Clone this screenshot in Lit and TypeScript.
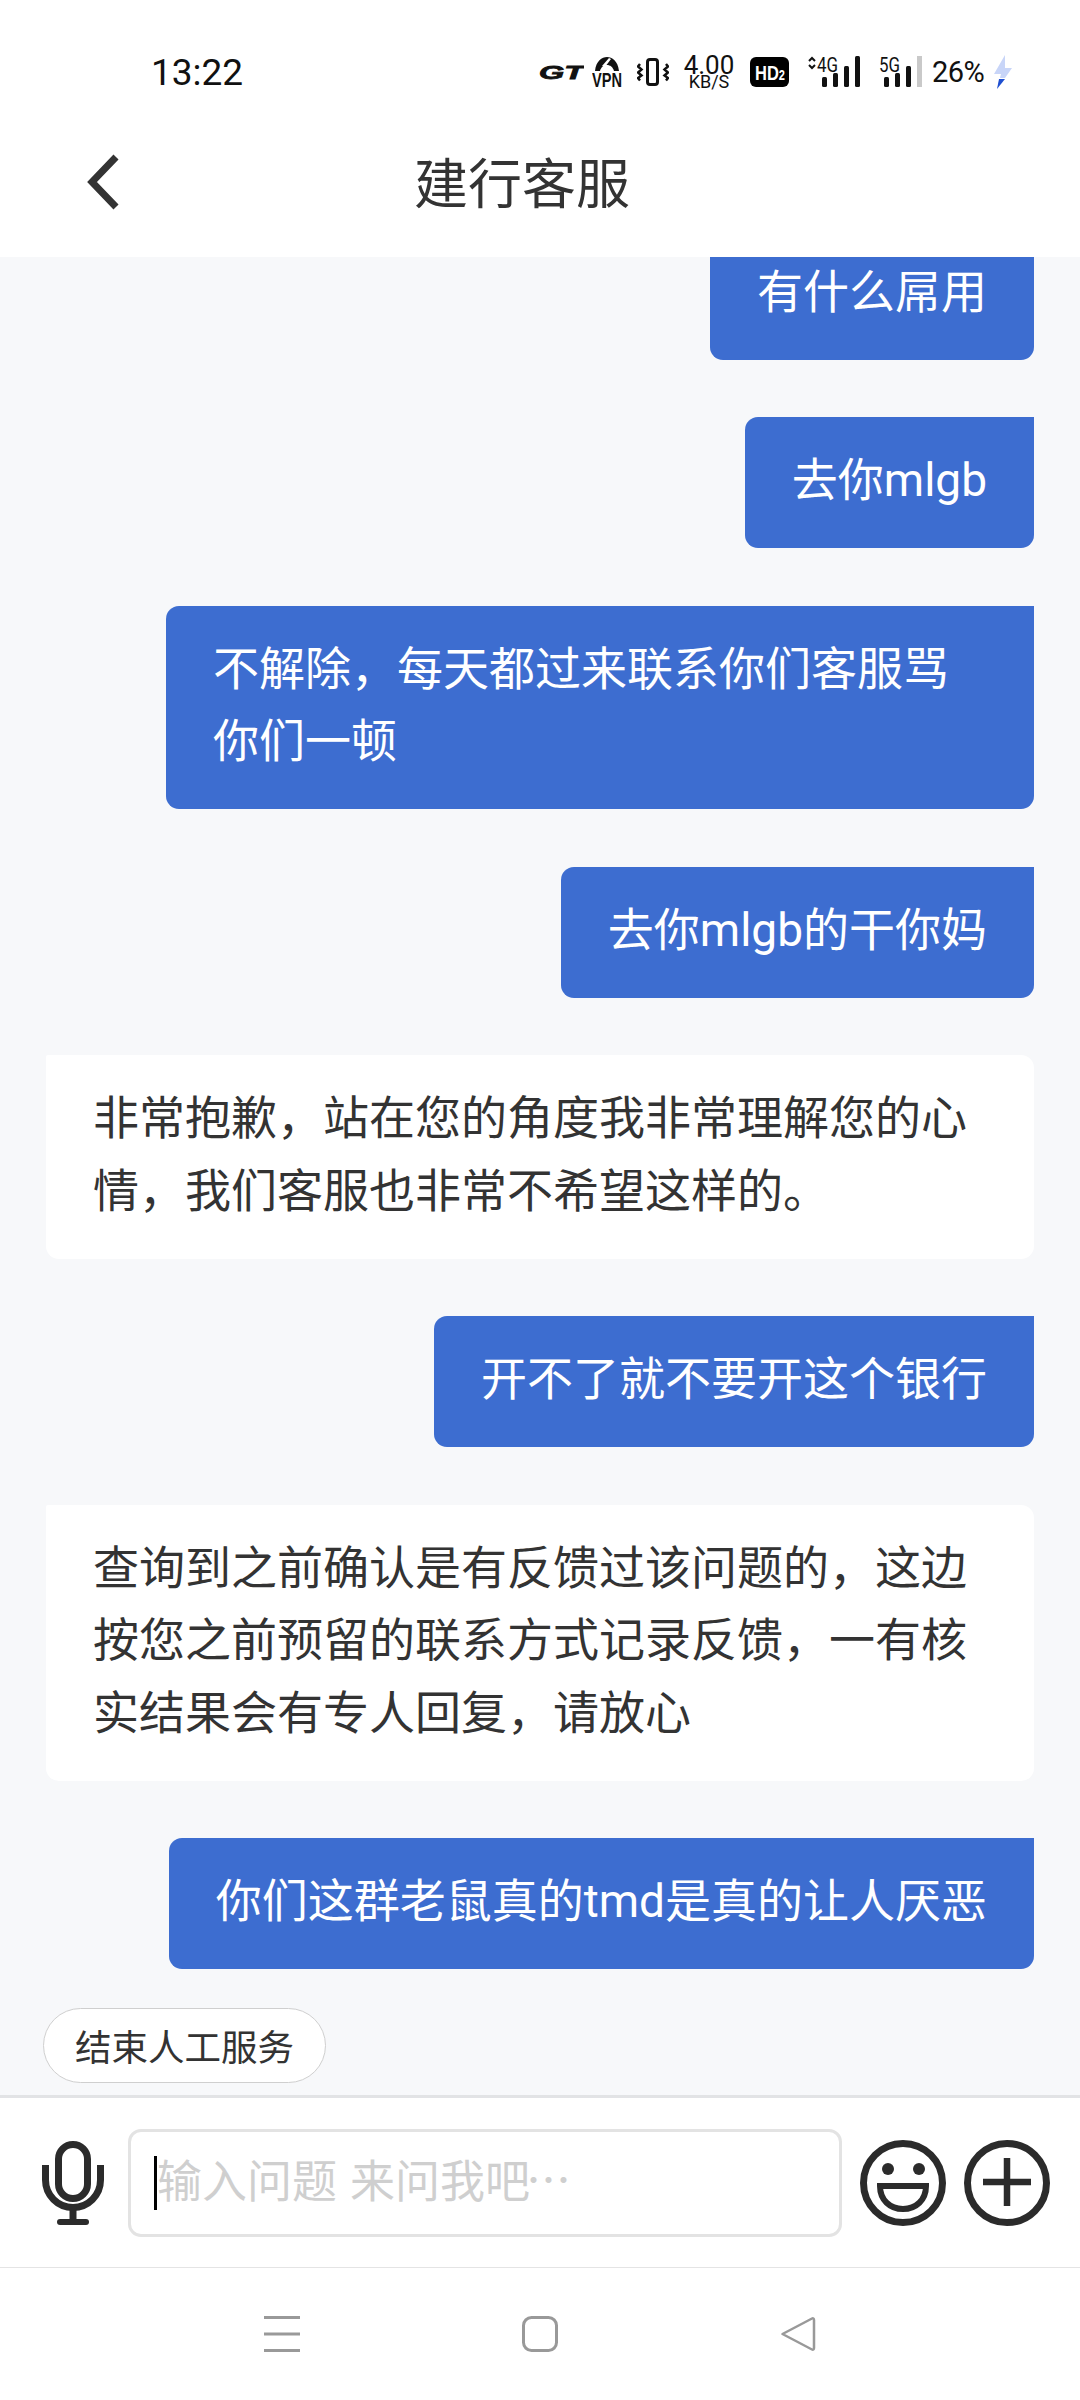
import { LitElement, css, html } from 'lit';
import { customElement } from 'lit/decorators.js';

type Msg = { from: 'user' | 'agent'; text: string };

const MESSAGES: Msg[] = [
  { from: 'user', text: '有什么屌用' },
  { from: 'user', text: '去你mlgb' },
  { from: 'user', text: '不解除，每天都过来联系你们客服骂你们一顿' },
  { from: 'user', text: '去你mlgb的干你妈' },
  { from: 'agent', text: '非常抱歉，站在您的角度我非常理解您的心情，我们客服也非常不希望这样的。' },
  { from: 'user', text: '开不了就不要开这个银行' },
  { from: 'agent', text: '查询到之前确认是有反馈过该问题的，这边按您之前预留的联系方式记录反馈，一有核实结果会有专人回复，请放心' },
  { from: 'user', text: '你们这群老鼠真的tmd是真的让人厌恶' },
];

@customElement('app-root')
export class AppRoot extends LitElement {
  private statusBar() {
    return html`
      <div class="status">
        <span class="time">13:22</span>
        <div class="status-icons">
          <svg class="gt" width="45" height="24" viewBox="0 0 45 24">
            <text x="0" y="18.500" textLength="45" lengthAdjust="spacingAndGlyphs" class="gt-text">GT</text>
          </svg>
          <svg class="vpn" width="30" height="38" viewBox="0 0 30 38">
            <path d="M3 17C4 7 10 3 15 3s11 4 12 14h-5C21 13 18 11 15 11s-6 2-7 6z" fill="#111" />
            <path d="M10 12l7-8 2 1-6 8z" fill="#fff" />
            <text x="0" y="33" textLength="30" lengthAdjust="spacingAndGlyphs" class="vpn-text">VPN</text>
          </svg>
          <svg class="vib" width="32" height="30" viewBox="0 0 32 30">
            <rect x="10.500" y="2.500" width="10" height="25" rx="2.500" fill="none" stroke="#111" stroke-width="3" />
            <path d="M3 7l-2 2.500 3.500 3L1 15.500l3.500 3L1 21l2 2.500M29 7l2 2.500-3.500 3 3.500 3-3.500 3L31 21l-2 2.500" fill="none" stroke="#111" stroke-width="2.500" />
          </svg>
          <div class="speed"><span class="speed-val">4.00</span><span class="speed-unit">KB/S</span></div>
          <svg class="hd" width="39" height="30" viewBox="0 0 39 30">
            <rect width="39" height="30" rx="6" fill="#000" />
            <text x="5" y="23" textLength="30" lengthAdjust="spacingAndGlyphs" class="hd-text">HD<tspan class="hd-sub">2</tspan></text>
          </svg>
          <svg class="sig-a" width="55" height="38" viewBox="0 -6 55 38">
            <path d="M4 5l3-3 3 3M4 9l3 3 3-3" fill="none" stroke="#111" stroke-width="2" />
            <text x="12" y="16" textLength="21" lengthAdjust="spacingAndGlyphs" class="net">4G</text>
            <rect x="17" y="21" width="5" height="10" rx="1.500" fill="#111" />
            <rect x="28" y="17" width="5" height="14" rx="1.500" fill="#111" />
            <rect x="39" y="10" width="5" height="21" rx="1.500" fill="#111" />
            <rect x="50" y="0" width="5" height="31" rx="1.500" fill="#111" />
          </svg>
          <svg class="sig-b" width="43" height="38" viewBox="0 -6 43 38">
            <text x="0" y="16" textLength="21" lengthAdjust="spacingAndGlyphs" class="net">5G</text>
            <rect x="5" y="21" width="5" height="10" rx="1.500" fill="#111" />
            <rect x="16" y="17" width="5" height="14" rx="1.500" fill="#111" />
            <rect x="27" y="10" width="5" height="21" rx="1.500" fill="#111" />
            <rect x="38" y="0" width="5" height="31" fill="#c9c9c9" />
          </svg>
          <span class="batt">26%</span>
          <svg class="bolt" width="19" height="34" viewBox="0 0 19 34">
            <path d="M12 0L1 19h7l-1 4h5l7-10h-7z" fill="#c8d5f8" />
            <path d="M6 24h6L4 34z" fill="#1f4fd0" />
          </svg>
        </div>
      </div>
    `;
  }

  render() {
    return html`
      <div class="page">
        <header class="top">
          ${this.statusBar()}
          <div class="nav">
            <svg class="back" width="34" height="56" viewBox="0 0 34 56">
              <path d="M30 3L6 28l24 25" fill="none" stroke="#333" stroke-width="7" />
            </svg>
            <h1 class="title">建行客服</h1>
          </div>
        </header>

        <main class="chat">
          ${MESSAGES.map((m) => html`<div class="bubble ${m.from}" lang="zh-CN">${m.text}</div>`)}
          <button class="end-btn">结束人工服务</button>
        </main>

        <div class="composer">
          <svg class="mic" width="62" height="84" viewBox="0 0 62 84">
            <rect x="16.500" y="3.500" width="29" height="54" rx="14.500" fill="none" stroke="#2b2b2b" stroke-width="7" />
            <path d="M3.500 24v15a27.500 27.500 0 0 0 55 0V24" fill="none" stroke="#2b2b2b" stroke-width="7" />
            <path d="M31 66v14" stroke="#2b2b2b" stroke-width="7" />
            <rect x="15" y="78" width="32" height="6" rx="3" fill="#2b2b2b" />
          </svg>
          <div class="input">
            <span class="caret"></span>
            <span class="placeholder">输入问题 来问我吧<span class="dots">…</span></span>
          </div>
          <svg class="emoji" width="86" height="86" viewBox="0 0 86 86">
            <circle cx="43" cy="43" r="39.500" fill="none" stroke="#2b2b2b" stroke-width="7" />
            <circle cx="28" cy="29" r="6" fill="#2b2b2b" />
            <circle cx="59" cy="29" r="6" fill="#2b2b2b" />
            <path d="M20 46h46c0 14-10 23-23 23S20 60 20 46z" fill="none" stroke="#2b2b2b" stroke-width="6" />
          </svg>
          <svg class="plus" width="86" height="86" viewBox="0 0 86 86">
            <circle cx="43" cy="43" r="39.500" fill="none" stroke="#2b2b2b" stroke-width="7" />
            <path d="M19 42h48M43 18v48" fill="none" stroke="#2b2b2b" stroke-width="6.500" />
          </svg>
        </div>

        <nav class="sysnav">
          <svg width="36" height="36" viewBox="0 0 36 36">
            <path d="M0 1.500h36M0 18h36M0 34.500h36" stroke="#999" stroke-width="3" />
          </svg>
          <svg width="36" height="36" viewBox="0 0 36 36">
            <rect x="1.500" y="1.500" width="33" height="33" rx="8" fill="none" stroke="#999" stroke-width="3" />
          </svg>
          <svg width="36" height="36" viewBox="0 0 36 36">
            <path d="M2.500 18L32 2.500c1-.5 2 0 2 1.500v28c0 1.500-1 2-2 1.500z" fill="none" stroke="#999" stroke-width="2.500" stroke-linejoin="round" />
          </svg>
        </nav>
      </div>
    `;
  }

  static styles = css`
    :host {
      display: block;
      font-family: 'Noto Sans CJK SC', 'Noto Sans', sans-serif;
    }

    .page {
      width: 1080px;
      height: 2400px;
      display: flex;
      flex-direction: column;
      background: #fff;
      overflow: hidden;
    }

    /* status bar + title */
    .top {
      height: 257px;
      flex-shrink: 0;
      display: flex;
      flex-direction: column;
    }

    .status {
      height: 110px;
      display: flex;
      align-items: center;
      padding: 34px 0 0 151px;
      box-sizing: border-box;
      font-family: Roboto, 'Noto Sans', sans-serif;
      color: #111;
    }

    .time {
      font-size: 37px;
      width: 388px;
    }

    .status-icons {
      display: flex;
      align-items: center;
    }

    .gt {
      margin-right: 8px;
    }

    .gt-text {
      font-family: 'Liberation Sans', sans-serif;
      font-size: 18px;
      font-weight: 700;
      font-style: italic;
      fill: #111;
      stroke: #111;
      stroke-width: 0.8px;
    }

    .vpn {
      margin: 2px 15px 0 0;
    }

    .vpn-text {
      font-family: 'Liberation Sans', sans-serif;
      font-size: 20px;
      font-weight: 700;
      fill: #111;
    }

    .vib {
      margin-right: 14px;
    }

    .speed {
      width: 52px;
      margin-right: 15px;
      display: flex;
      flex-direction: column;
      align-items: center;
      line-height: 1;
    }

    .speed-val {
      font-size: 26px;
      height: 21px;
      margin-top: -3px;
    }

    .speed-unit {
      font-size: 18px;
      height: 17px;
    }

    .hd {
      margin-right: 16px;
    }

    .hd-text {
      font-family: 'Liberation Sans', sans-serif;
      font-size: 21px;
      font-weight: 700;
      fill: #fff;
    }

    .hd-sub {
      font-size: 14px;
    }

    .sig-a {
      margin: -6px 19px 0 0;
    }

    .sig-b {
      margin: -6px 10px 0 0;
    }

    .net {
      font-family: Roboto, sans-serif;
      font-size: 20px;
      fill: #111;
    }

    .batt {
      width: 53px;
      margin-right: 8px;
      font-size: 29px;
      letter-spacing: -0.5px;
    }

    .nav {
      flex: 1;
      display: flex;
      align-items: center;
      padding: 0 0 0 86px;
    }

    .back {
      margin-right: 294px;
      margin-top: -4px;
    }

    .title {
      margin: -5px 0 0;
      font-size: 54px;
      font-weight: 400;
      color: #333;
      line-height: 72px;
    }

    /* chat list, pinned to the bottom so older messages clip off the top */
    .chat {
      height: 1838px;
      flex-shrink: 0;
      box-sizing: border-box;
      display: flex;
      flex-direction: column;
      justify-content: flex-end;
      gap: 57.5px;
      padding: 0 46px 12px;
      background: #f7f8fa;
      overflow: hidden;
    }

    .bubble {
      flex-shrink: 0;
      box-sizing: border-box;
      padding: 27px 47px 31.5px;
      font-family: Roboto, 'Noto Sans CJK SC', sans-serif;
      font-size: 46px;
      line-height: 72.5px;
      border-radius: 13px;
    }

    .user {
      align-self: flex-end;
      max-width: 868px;
      background: #3d6dd0;
      color: #fff;
      border-top-right-radius: 0;
    }

    .agent {
      align-self: flex-start;
      max-width: 988px;
      background: #fff;
      color: #333;
      border-top-left-radius: 2px;
    }

    .end-btn {
      align-self: flex-start;
      flex-shrink: 0;
      height: 75px;
      margin: -18.5px 0 0 -3px;
      padding: 0 31px;
      background: #fff;
      border: 1px solid #cfcfcf;
      border-radius: 38px;
      font-family: inherit;
      font-size: 36.5px;
      color: #333;
    }

    /* input row */
    .composer {
      height: 173px;
      flex-shrink: 0;
      box-sizing: border-box;
      display: flex;
      align-items: center;
      padding: 0 0 0 42px;
      border-top: 3px solid #e2e3e5;
      border-bottom: 1px solid #e4e4e4;
    }

    .mic {
      margin-right: 24px;
    }

    .input {
      width: 714px;
      height: 108px;
      box-sizing: border-box;
      margin-right: 18px;
      display: flex;
      align-items: center;
      padding-left: 23px;
      border: 3px solid #e3e3e3;
      border-radius: 13px;
    }

    .caret {
      width: 3px;
      height: 54px;
      background: #000;
      flex-shrink: 0;
    }

    .placeholder {
      padding-bottom: 8px;
      font-size: 45px;
      word-spacing: 3px;
      color: #cfcfcf;
      white-space: nowrap;
    }

    .dots {
      margin-left: -4px;
    }

    .emoji {
      margin-right: 18px;
    }

    .sysnav {
      flex: 1;
      display: flex;
      align-items: flex-start;
      padding: 48px 0 0 264px;
      gap: 222px;
    }
  `;
}

declare global {
  interface HTMLElementTagNameMap {
    'app-root': AppRoot;
  }
}
